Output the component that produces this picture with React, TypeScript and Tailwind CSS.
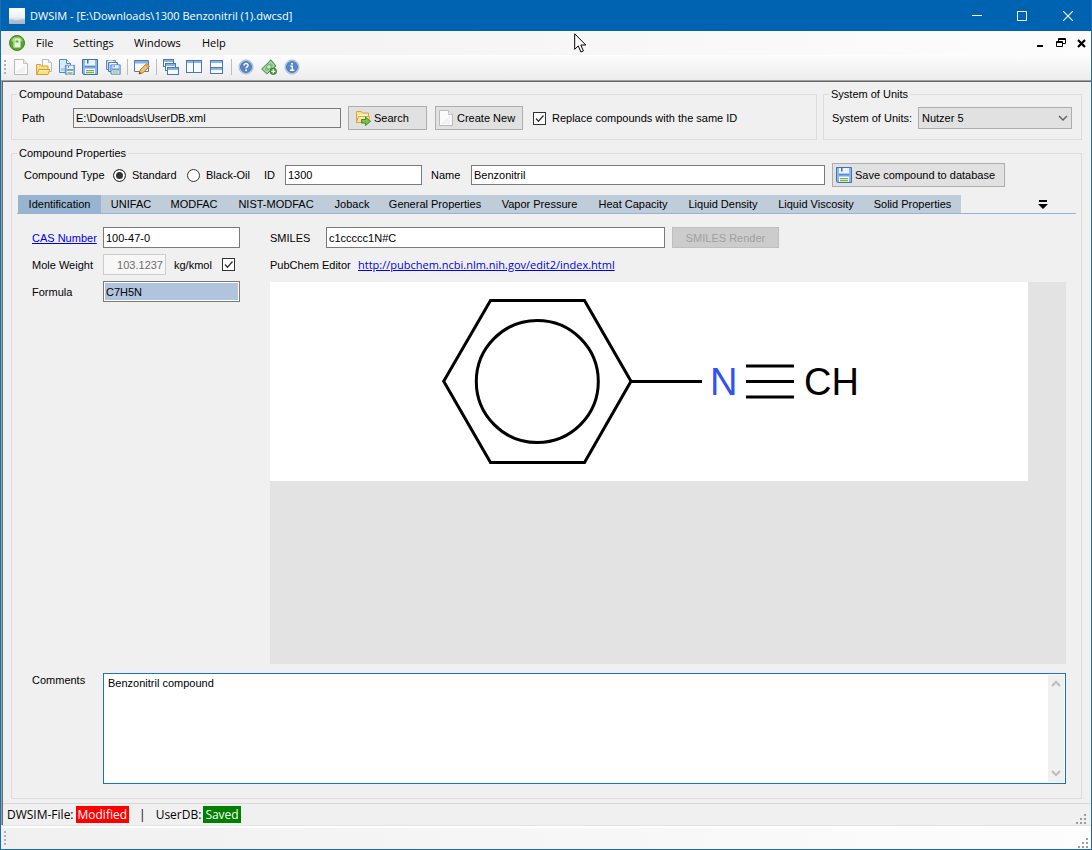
import React, { useState } from "react";

type IconProps = { children: React.ReactNode; size?: number };

function Icon({ children, size = 16 }: IconProps) {
  return (
    <svg width={size} height={size} viewBox="0 0 16 16" className="block shrink-0" aria-hidden="true">
      {children}
    </svg>
  );
}

const NewFileIcon = () => (
  <Icon>
    <path d="M1.5 .5h9l4 4v11h-13z" fill="#fbfbfb" stroke="#b9b9b9" />
    <path d="M10.5 .5v4h4" fill="#ececec" stroke="#c4c4c4" />
    <path d="M3 13l9-7v8H3z" fill="#f1f1f1" />
  </Icon>
);

const OpenIcon = () => (
  <Icon>
    <path d="M6.500 .5h6l3 3v9h-9z" fill="#fafafa" stroke="#b9b9b9" />
    <path d="M12.500 .5v3h3" fill="#eee" stroke="#c4c4c4" />
    <path d="M.5 15.500v-10h4l1 1.500h6.500v3" fill="#f6dc8c" stroke="#d9a335" />
    <path d="M.5 15.500l2.500-5h11l-2 5z" fill="#fbe08a" stroke="#d99a2b" />
    <path d="M3.500 11.500h9" stroke="#fff3c4" />
  </Icon>
);

function Floppy() {
  return (
    <g>
      <path d="M.5 .5h15v15h-14l-1-1z" fill="#7ba6e2" stroke="#3f70b8" />
      <path d="M1.500 1.500h1v12h-1zM13.500 1.500h1v13h-1z" fill="#a9c8f1" />
      <path d="M3 1h10v5.500H3z" fill="#eaf2fc" />
      <path d="M5 1h1.500v3.500H5z" fill="#3f6fb5" />
      <path d="M3 9.500h10V15H3z" fill="#f5faf0" />
      <path d="M4 11h8v1.200H4zM4 13h8v1.200H4z" fill="#77b255" />
      <path d="M2.500 7.500h11" stroke="#5a8ad0" />
    </g>
  );
}

const SaveIcon = () => (
  <Icon>
    <Floppy />
  </Icon>
);

const SaveAsIcon = () => (
  <Icon>
    <path d="M.5 .5h7l4 4v9H.5z" fill="#dcebfa" stroke="#4d8ac4" />
    <path d="M7.500 .5v4h4" fill="#fff" stroke="#4d8ac4" />
    <path d="M2 9h5v3H2z" fill="#a9cdf0" />
    <g transform="translate(6 6) scale(.625)">
      <Floppy />
    </g>
  </Icon>
);

const SaveAllIcon = () => (
  <Icon>
    <path d="M1.500 1.500h9v9h-9z" fill="#cfe0f5" stroke="#5c88c6" />
    <path d="M3 1.500h5v3H3z" fill="#fff" />
    <path d="M3.500 3.500h9v9h-9z" fill="#b9d1f0" stroke="#4f7dbf" />
    <path d="M5 4h6v2H5z" fill="#fff" />
    <g transform="translate(5.500 5.500) scale(.63)">
      <Floppy />
    </g>
  </Icon>
);

const EditIcon = () => (
  <Icon>
    <path d="M.5 1.500h14v11H.5z" fill="#fafcff" stroke="#4f7dbf" />
    <path d="M1 2h13v2.500H1z" fill="#8ab0e2" />
    <path d="M5 15l1.200-4 6.500-6.500 2.800 2.800L9 13.800z" fill="#f6c25c" stroke="#b4782a" />
    <path d="M5 15l.7-2.300 1.600 1.600z" fill="#5c3b17" />
    <path d="M11.500 5.700l2.800 2.800" stroke="#e8907d" strokeWidth="1.500" />
  </Icon>
);

function MiniWindow({ x, y, w, h }: { x: number; y: number; w: number; h: number }) {
  return (
    <g>
      <rect x={x + 0.5} y={y + 0.5} width={w - 1} height={h - 1} fill="#f7faff" stroke="#4a76ba" />
      <rect x={x + 1} y={y + 1} width={w - 2} height="2" fill="#8db1e2" />
    </g>
  );
}

const CascadeIcon = () => (
  <Icon>
    <MiniWindow x={0} y={0} w={11} h={8} />
    <MiniWindow x={2} y={4} w={11} h={8} />
    <MiniWindow x={4} y={8} w={12} h={8} />
  </Icon>
);

const TileVerticalIcon = () => (
  <Icon>
    <MiniWindow x={0} y={1} w={8} h={13} />
    <MiniWindow x={7} y={1} w={9} h={13} />
  </Icon>
);

const TileHorizontalIcon = () => (
  <Icon>
    <MiniWindow x={1} y={1} w={13} h={8} />
    <MiniWindow x={1} y={8} w={13} h={7} />
  </Icon>
);

function BlueDisc({ children }: { children: React.ReactNode }) {
  return (
    <Icon>
      <circle cx="8" cy="8" r="7" fill="#dce6f4" stroke="#9ab3d8" />
      <circle cx="8" cy="8" r="5.600" fill="#5686c8" stroke="#4572b2" strokeWidth=".8" />
      {children}
    </Icon>
  );
}

const HelpIcon = () => (
  <BlueDisc>
    <path d="M6 6.500c0-2.800 4.200-2.500 4 0-.1 1.300-1.900 1.300-1.900 2.700" fill="none" stroke="#fff" strokeWidth="1.500" />
    <circle cx="8.100" cy="11.300" r=".95" fill="#fff" />
  </BlueDisc>
);

const InfoIcon = () => (
  <BlueDisc>
    <circle cx="8" cy="4.700" r="1" fill="#fff" />
    <path d="M6.300 7.300h2v3.500M6 11.200h4.300" fill="none" stroke="#fff" strokeWidth="1.400" />
  </BlueDisc>
);

const DonateIcon = () => (
  <Icon>
    <path d="M.6 10L10 .8l5 6.200-9.200 8z" fill="#86c186" stroke="#458f50" />
    <path d="M2.600 9.900l7.300-7 3.200 4-7.200 6.300z" fill="none" stroke="#c9e6c5" strokeWidth=".8" />
    <circle cx="7.900" cy="7.900" r="2.200" fill="#cfeacb" stroke="#4e9a55" strokeWidth=".7" />
    <circle cx="12.300" cy="12.300" r="3.300" fill="#4fa03c" stroke="#2f7a29" strokeWidth=".8" />
    <path d="M12.300 10.300v4M10.300 12.300h4" stroke="#fff" strokeWidth="1.300" />
  </Icon>
);

const SearchFolderIcon = () => (
  <Icon>
    <path d="M1.500 12.500v-11h5l1 1.500h6v9.500z" fill="#f8e08f" stroke="#d9a441" />
    <path d="M3 4.500h9.500v2H3z" fill="#fffbe8" />
    <path d="M1.500 12.500l2-6h11l-1 6z" fill="#fbe7a2" stroke="#dba845" />
    <path d="M6.500 9.500h4V7l5 4.300-5 4.200v-2.500h-4z" fill="#7dbd52" stroke="#3f8a2b" />
  </Icon>
);

const AppDocIcon = () => (
  <Icon>
    <circle cx="8" cy="8" r="7.500" fill="#57a62b" stroke="#42851f" />
    <path d="M2 6.500a6.200 6.200 0 0 1 12 0z" fill="#8aca5c" />
    <rect x="4.500" y="3.500" width="7" height="9" fill="#e9f6df" />
    <path d="M6.500 5.500h3v2h-3z" fill="#62ad38" />
    <path d="M5.500 4v8" stroke="#b4dc9b" />
  </Icon>
);

function Chevron({ up = false, color = "#606060", width = "1.4" }: { up?: boolean; color?: string; width?: string }) {
  return (
    <svg width="10" height="8" viewBox="0 0 10 8" fill="none" stroke={color} strokeWidth={width} aria-hidden="true">
      <path d={up ? "M1 6l4-4 4 4" : "M1 2l4 4 4-4"} />
    </svg>
  );
}

function CheckBox({ id, label }: { id: string; label?: string }) {
  return (
    <span className="relative block size-[13px] shrink-0">
      <input
        id={id}
        type="checkbox"
        defaultChecked
        aria-label={label}
        className="peer block size-[13px] appearance-none border border-[#333] bg-white"
      />
      <svg viewBox="0 0 13 13" className="pointer-events-none absolute inset-0 hidden size-[13px] peer-checked:block" aria-hidden="true">
        <path d="M3 6.500l2.500 2.700 5-5.700" fill="none" stroke="#333" strokeWidth="1.300" />
      </svg>
    </span>
  );
}

function Radio({ id, checked = false }: { id: string; checked?: boolean }) {
  return (
    <input
      id={id}
      name="compound-type"
      type="radio"
      defaultChecked={checked}
      className="block size-[13px] shrink-0 appearance-none rounded-full border border-[#333] bg-white checked:bg-[#333] checked:shadow-[inset_0_0_0_2px_white]"
    />
  );
}

function Grip() {
  return (
    <svg width="11" height="11" viewBox="0 0 11 11" fill="#9d9d9d" aria-hidden="true">
      <path d="M8 0h2v2H8zM4 4h2v2H4zM8 4h2v2H8zM0 8h2v2H0zM4 8h2v2H4zM8 8h2v2H8z" />
    </svg>
  );
}

function DotBar() {
  return (
    <svg width="4" height="16" viewBox="0 0 4 16" fill="#b0b0b0" className="shrink-0" aria-hidden="true">
      <path d="M1 1h2v2H1zM1 5h2v2H1zM1 9h2v2H1zM1 13h2v2H1z" />
    </svg>
  );
}

const fieldClass = "min-w-0 border border-[#7a7a7a] bg-white outline-none";
const buttonClass = "flex h-6 shrink-0 items-center border border-[#adadad] bg-[#e1e1e1]";
const groupClass = "min-w-0 border border-[#dcdcdc]";
const legendClass = "ml-[5px] px-[2px] leading-[13px]";

const toolGroups = [
  [
    ["New", NewFileIcon],
    ["Open", OpenIcon],
    ["Save As", SaveAsIcon],
    ["Save", SaveIcon],
    ["Save All", SaveAllIcon],
  ],
  [["Edit", EditIcon]],
  [
    ["Cascade", CascadeIcon],
    ["Tile Vertical", TileVerticalIcon],
    ["Tile Horizontal", TileHorizontalIcon],
  ],
  [
    ["Help", HelpIcon],
    ["Donate", DonateIcon],
    ["About", InfoIcon],
  ],
] as [string, () => React.JSX.Element][][];

const tabs = [
  ["Identification", "w-[83px]"],
  ["UNIFAC", "w-[60px]"],
  ["MODFAC", "w-[66px]"],
  ["NIST-MODFAC", "w-[98px]"],
  ["Joback", "w-[54px]"],
  ["General Properties", "w-[112px]"],
  ["Vapor Pressure", "w-[97px]"],
  ["Heat Capacity", "w-[90px]"],
  ["Liquid Density", "w-[90px]"],
  ["Liquid Viscosity", "w-[96px]"],
  ["Solid Properties", "w-[97px]"],
];

function TitleBar() {
  return (
    <header className="flex h-[31px] shrink-0 items-center bg-[#0063b1] pl-2 font-['Open_Sans',sans-serif] text-[11px] text-white">
      <svg width="16" height="16" viewBox="0 0 16 16" aria-hidden="true">
        <defs>
          <linearGradient id="mist" x1="0" y1="0" x2="0" y2="1">
            <stop offset="0" stopColor="#ffffff" />
            <stop offset=".55" stopColor="#eef2f5" />
            <stop offset="1" stopColor="#a9bccb" />
          </linearGradient>
        </defs>
        <path d="M0 0h16v16H0z" fill="url(#mist)" />
        <path d="M0 12l3-1 3 1.500 4-.5 3-1 3 .5V16H0z" fill="#9fb4c6" opacity=".6" />
      </svg>
      <h1 className="ml-[5px] flex-1">DWSIM - [E:\Downloads\1300 Benzonitril (1).dwcsd]</h1>
      <button aria-label="Minimize" className="flex h-full w-[45px] items-center justify-center">
        <svg width="10" height="10" viewBox="0 0 10 10" stroke="#fff"><path d="M0 4.500h10" /></svg>
      </button>
      <button aria-label="Maximize" className="flex h-full w-[45px] items-center justify-center">
        <svg width="10" height="10" viewBox="0 0 10 10" fill="none" stroke="#fff"><path d="M.5 .5h9v9h-9z" /></svg>
      </button>
      <button aria-label="Close" className="flex h-full w-[47px] items-center justify-center">
        <svg width="10" height="10" viewBox="0 0 10 10" stroke="#fff" strokeWidth="1.100"><path d="M0 0l10 10M10 0L0 10" /></svg>
      </button>
    </header>
  );
}

function MenuBar() {
  return (
    <nav className="flex h-6 shrink-0 items-center bg-linear-to-r from-[#f0f0f0] to-[#fdfdfd] pl-2 pr-[5px] font-['Open_Sans',sans-serif] text-[11px]">
      <AppDocIcon />
      <button className="ml-[11px] w-[37px] text-left">File</button>
      <button className="w-[61px] text-left">Settings</button>
      <button className="w-[68px] text-left">Windows</button>
      <button className="text-left">Help</button>
      <div className="flex-1" />
      <div className="flex items-center gap-[11px]">
        <button aria-label="Minimize document">
          <svg width="10" height="10" viewBox="0 0 10 10" className="block"><path d="M2 7h6v2H2z" /></svg>
        </button>
        <button aria-label="Restore document">
          <svg width="10" height="10" viewBox="0 0 10 10" fill="none" stroke="#000" className="block">
            <path d="M2.500 3V.5h7v5H7M2 1.500h8M.5 3.500h6v5h-6zM0 4.500h7" />
          </svg>
        </button>
        <button aria-label="Close document">
          <svg width="9" height="9" viewBox="0 0 9 9" stroke="#000" strokeWidth="2.200" className="block"><path d="M1 1l7 7M8 1L1 8" /></svg>
        </button>
      </div>
    </nav>
  );
}

function ToolBar() {
  return (
    <div className="flex h-[25px] shrink-0 items-center bg-linear-to-b from-[#fdfdfd] to-[#ececec] pb-px pl-[2px]">
      <DotBar />
      <div className="ml-[2px] flex items-center">
        {toolGroups.map((group, i) => (
          <React.Fragment key={i}>
            {i > 0 && (
              <span className="flex w-[6px] justify-center">
                <span className="h-4 w-px bg-[#bdbdbd]" />
              </span>
            )}
            {group.map(([name, Glyph]) => (
              <button key={name} aria-label={name} className="flex w-[23px] items-center justify-center">
                <Glyph />
              </button>
            ))}
          </React.Fragment>
        ))}
      </div>
    </div>
  );
}

function Molecule() {
  return (
    <svg width="758" height="199" viewBox="0 0 758 199" className="block bg-white" role="img" aria-label="Structure formula">
      <g fill="none" stroke="#000" strokeWidth="3">
        <path d="M173.700 99.300L220.500 18.500h94l46.500 80.800-46.500 81.200h-94z" />
        <circle cx="267.300" cy="99.500" r="61" />
        <path d="M361 99.500h71M476 84h48M476 99.500h48M476 115h48" />
      </g>
      <g fontFamily="Liberation Sans, Arial, sans-serif" fontSize="38">
        <text x="440" y="113" fill="#3050f8">N</text>
        <text x="534" y="113">CH</text>
      </g>
    </svg>
  );
}

function IdentificationPage() {
  return (
    <div className="flex flex-1 flex-col pl-[15px] pr-[10px] pt-[13px]">
      <div className="flex flex-1 gap-[30px]">
        <div className="flex w-[208px] shrink-0 flex-col gap-[6px]">
          <div className="flex h-[21px] items-center">
            <div className="w-[71px]">
              <a href="#cas" className="text-[#0000ee] underline">CAS Number</a>
            </div>
            <input aria-label="CAS Number" defaultValue="100-47-0" className={`${fieldClass} h-[21px] flex-1 px-[2px]`} />
          </div>
          <div className="flex h-[21px] items-center">
            <label htmlFor="weight" className="w-[71px]">Mole Weight</label>
            <input
              id="weight"
              readOnly
              defaultValue="103.1237"
              className="h-[21px] w-[63px] border border-[#ccc] bg-[#f7f7f7] px-[2px] text-right text-[#6d6d6d]"
            />
            <span className="ml-2 w-12">kg/kmol</span>
            <CheckBox id="weight-auto" label="Calculate mole weight" />
          </div>
          <div className="flex h-[21px] items-center">
            <label htmlFor="formula" className="w-[71px]">Formula</label>
            <input
              id="formula"
              defaultValue="C7H5N"
              className="h-[21px] min-w-0 flex-1 border border-[#7a7a7a] bg-[#b0c4de] px-[2px] shadow-[inset_0_0_0_1px_white] outline-none"
            />
          </div>
        </div>
        <div className="flex min-w-0 flex-1 flex-col gap-[6px]">
          <div className="flex h-[21px] items-center">
            <label htmlFor="smiles" className="w-14">SMILES</label>
            <input id="smiles" defaultValue="c1ccccc1N#C" className={`${fieldClass} h-[21px] w-[339px] px-[2px]`} />
            <button disabled className="ml-[7px] h-[21px] w-[107px] border border-[#bfbfbf] bg-[#ccc] text-[#a0a0a0]">
              SMILES Render
            </button>
          </div>
          <div className="flex h-[21px] items-center">
            <span className="w-[88px]">PubChem Editor</span>
            <a
              href="http://pubchem.ncbi.nlm.nih.gov/edit2/index.html"
              className="font-['Open_Sans',sans-serif] text-[#0000ee] underline"
            >
              http://pubchem.ncbi.nlm.nih.gov/edit2/index.html
            </a>
          </div>
          <div className="mt-px min-h-[382px] flex-1 overflow-hidden bg-[#e3e3e3]">
            <Molecule />
          </div>
        </div>
      </div>
      <div className="mt-[9px] flex h-[111px] shrink-0">
        <label htmlFor="comments" className="w-[71px] shrink-0">Comments</label>
        <div className="flex flex-1 border border-[#1673c9] bg-white p-px">
          <textarea
            id="comments"
            defaultValue="Benzonitril compound"
            className="flex-1 resize-none overflow-hidden px-[3px] py-px outline-none"
          />
          <div className="flex w-4 flex-col items-center justify-between bg-[#f0f0f0] py-[5px]">
            <Chevron up color="#bdbdbd" width="2" />
            <Chevron color="#bdbdbd" width="2" />
          </div>
        </div>
      </div>
    </div>
  );
}

export default function App() {
  const [active, setActive] = useState("Identification");
  return (
    <div className="relative flex min-h-screen flex-col border-x border-b border-[#1a6db3] bg-[#f0f0f0] font-['Liberation_Sans',Arial,sans-serif] text-[11px] leading-[14px] text-black">
      <TitleBar />
      <MenuBar />
      <ToolBar />

      <main className="flex flex-1 flex-col border-l border-t border-[#a0a0a0]">
        <div className="flex flex-1 flex-col border-l border-t border-[#696969]">
          <div className="flex flex-1 flex-col pb-[4px] pl-2 pr-[9px] pt-[6px]">
            <div className="flex gap-[6px]">
              <fieldset className={`${groupClass} flex-1`}>
                <legend className={legendClass}>Compound Database</legend>
                <div className="flex items-center pb-[9px] pl-[10px] pt-[5px]">
                  <label htmlFor="path" className="w-[51px]">Path</label>
                  <input
                    id="path"
                    readOnly
                    defaultValue="E:\Downloads\UserDB.xml"
                    className="h-5 w-[268px] border border-[#7a7a7a] bg-[#f0f0f0] px-[2px] outline-none"
                  />
                  <button className={`${buttonClass} ml-[7px] w-[79px] gap-[3px] pl-[6px]`}>
                    <SearchFolderIcon />
                    Search
                  </button>
                  <button className={`${buttonClass} ml-2 w-[88px] gap-[3px] pl-[2px]`}>
                    <NewFileIcon />
                    Create New
                  </button>
                  <div className="ml-[10px] flex items-center gap-[6px]">
                    <CheckBox id="replace" />
                    <label htmlFor="replace">Replace compounds with the same ID</label>
                  </div>
                </div>
              </fieldset>
              <fieldset className={`${groupClass} w-[259px]`}>
                <legend className={legendClass}>System of Units</legend>
                <div className="flex items-center pb-[9px] pl-2 pr-[9px] pt-[5px]">
                  <label htmlFor="units" className="w-[86px]">System of Units:</label>
                  <div className="relative my-px flex-1">
                    <select id="units" className="block h-[22px] w-full appearance-none border border-[#adadad] bg-[#e1e1e1] px-[3px] outline-none">
                      <option>Nutzer 5</option>
                    </select>
                    <span className="pointer-events-none absolute right-1 top-[7px]">
                      <Chevron />
                    </span>
                  </div>
                </div>
              </fieldset>
            </div>

            <fieldset className={`${groupClass} mt-[7px] flex flex-1 flex-col pb-[14px]`}>
              <legend className={legendClass}>Compound Properties</legend>
              <div className="flex items-center pl-3 pr-[76px] pt-[3px]">
                <span className="w-[89px] shrink-0">Compound Type</span>
                <Radio id="standard" checked />
                <label htmlFor="standard" className="ml-[6px] w-[55px] shrink-0">Standard</label>
                <Radio id="black-oil" />
                <label htmlFor="black-oil" className="ml-[6px] w-[58px] shrink-0">Black-Oil</label>
                <label htmlFor="compound-id" className="w-[21px] shrink-0">ID</label>
                <input id="compound-id" defaultValue="1300" className={`${fieldClass} h-5 w-[137px] px-[2px]`} />
                <label htmlFor="name" className="ml-[9px] w-10 shrink-0">Name</label>
                <input id="name" defaultValue="Benzonitril" className={`${fieldClass} h-5 flex-1 px-[2px]`} />
                <button className={`${buttonClass} ml-[7px] w-[173px] gap-[3px] pl-[3px]`}>
                  <SaveIcon />
                  Save compound to database
                </button>
              </div>

              <div className="mx-[5px] mt-2 flex flex-1 flex-col">
                <div className="flex h-[19px] shrink-0 items-stretch border-b border-[#99b4d1] pl-px">
                  <div role="tablist" className="flex">
                    {tabs.map(([name, width]) => (
                      <button
                        key={name}
                        role="tab"
                        aria-selected={active === name}
                        onClick={() => setActive(name)}
                        className={`${width} whitespace-nowrap text-center ${active === name ? "bg-[#99b4d1]" : "bg-[#bfcddb]"}`}
                      >
                        {name}
                      </button>
                    ))}
                  </div>
                  <div className="flex-1" />
                  <button aria-label="More tabs" className="mr-7 flex items-center">
                    <svg width="10" height="9" viewBox="0 0 10 9"><path d="M1 0h8v2H1zM0 4h10L5 9z" /></svg>
                  </button>
                </div>
                <IdentificationPage />
              </div>
            </fieldset>
          </div>

          <div className="flex h-[22px] shrink-0 items-center border-t border-[#d7d7d7] pl-1 pr-1 font-['Open_Sans',sans-serif] text-xs">
            <span>DWSIM-File:</span>
            <span className="ml-[2px] bg-[#ff0000] px-[2px] leading-[17px] text-white">Modified</span>
            <span className="ml-[10px]">|</span>
            <span className="ml-[10px]">UserDB:</span>
            <span className="ml-[2px] bg-[#008000] px-[2px] leading-[17px] text-white">Saved</span>
            <div className="flex-1" />
            <div className="self-end"><Grip /></div>
          </div>
        </div>
      </main>

      <footer className="flex h-6 shrink-0 items-center justify-between border-t border-[#e3e3e3] bg-linear-to-r from-[#f0f0f0] to-[#fdfdfd] pl-[2px] pr-[2px] shadow-[inset_0_2px_0_white]">
        <DotBar />
        <div className="self-end"><Grip /></div>
      </footer>

      <svg width="13" height="20" viewBox="0 0 13 20" className="pointer-events-none absolute left-[573px] top-[33px]" aria-hidden="true">
        <path d="M.7 .8v15.500l3.600-3.400 2.600 6.100 2.500-1.100-2.600-5.900h5z" fill="#fff" stroke="#000" strokeWidth="1" />
      </svg>
    </div>
  );
}
